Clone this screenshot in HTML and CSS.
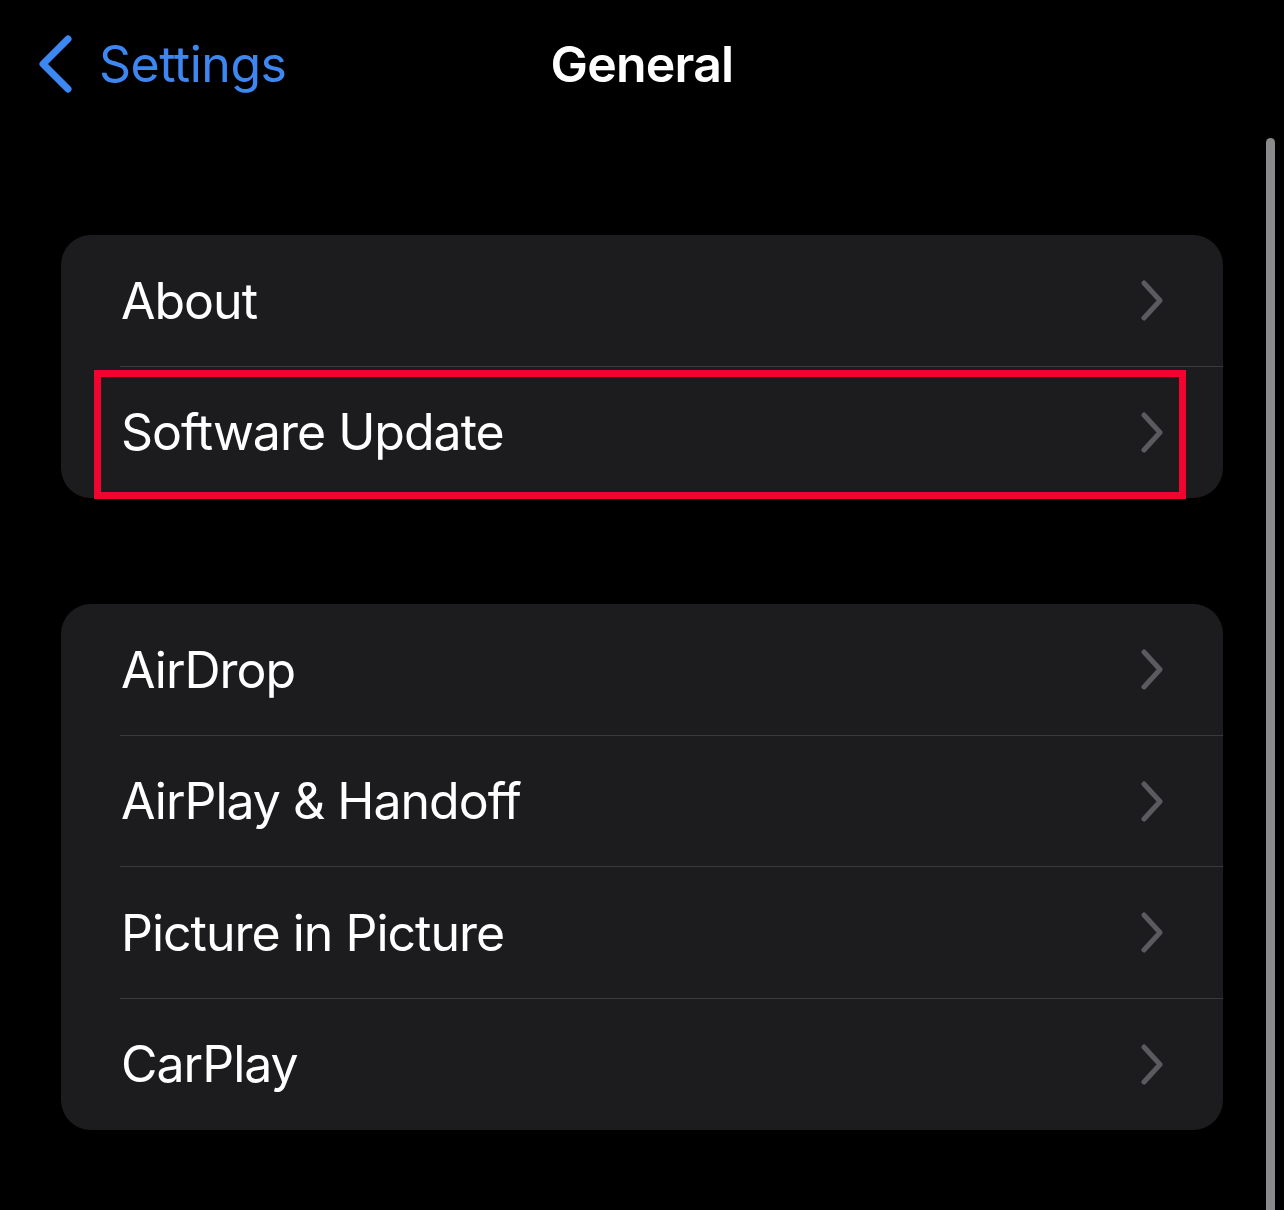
FILE: index.html
```html
<!DOCTYPE html>
<html lang="en">
<head>
<meta charset="utf-8">
<title>General</title>
<link rel="stylesheet" href="styles.css">
</head>
<body>
<div class="screen">
  <header class="nav">
    <a class="back" href="#">
      <svg class="back-icon" width="36" height="58" viewBox="0 0 36 58" aria-hidden="true">
        <path d="M31 4 L6 29 L31 54" fill="none" stroke="#3d87f2" stroke-width="7" stroke-linecap="round" stroke-linejoin="round"/>
      </svg>
      <span class="back-label">Settings</span>
    </a>
    <h1 class="title">General</h1>
    <div class="nav-spacer"></div>
  </header>

  <main class="content">
    <section class="group">
      <div class="row">
        <span class="row-label">About</span>
        <svg class="chev" width="25" height="41" viewBox="0 0 25 41" aria-hidden="true"><path d="M4 3 L20 20.5 L4 38" fill="none" stroke="#5b5b5f" stroke-width="5" stroke-linecap="round" stroke-linejoin="round"/></svg>
      </div>
      <div class="row highlighted">
        <span class="row-label">Software Update</span>
        <svg class="chev" width="25" height="41" viewBox="0 0 25 41" aria-hidden="true"><path d="M4 3 L20 20.5 L4 38" fill="none" stroke="#5b5b5f" stroke-width="5" stroke-linecap="round" stroke-linejoin="round"/></svg>
        <div class="highlight-box"></div>
      </div>
    </section>

    <section class="group">
      <div class="row">
        <span class="row-label">AirDrop</span>
        <svg class="chev" width="25" height="41" viewBox="0 0 25 41" aria-hidden="true"><path d="M4 3 L20 20.5 L4 38" fill="none" stroke="#5b5b5f" stroke-width="5" stroke-linecap="round" stroke-linejoin="round"/></svg>
      </div>
      <div class="row">
        <span class="row-label">AirPlay &amp; Handoff</span>
        <svg class="chev" width="25" height="41" viewBox="0 0 25 41" aria-hidden="true"><path d="M4 3 L20 20.5 L4 38" fill="none" stroke="#5b5b5f" stroke-width="5" stroke-linecap="round" stroke-linejoin="round"/></svg>
      </div>
      <div class="row">
        <span class="row-label">Picture in Picture</span>
        <svg class="chev" width="25" height="41" viewBox="0 0 25 41" aria-hidden="true"><path d="M4 3 L20 20.5 L4 38" fill="none" stroke="#5b5b5f" stroke-width="5" stroke-linecap="round" stroke-linejoin="round"/></svg>
      </div>
      <div class="row">
        <span class="row-label">CarPlay</span>
        <svg class="chev" width="25" height="41" viewBox="0 0 25 41" aria-hidden="true"><path d="M4 3 L20 20.5 L4 38" fill="none" stroke="#5b5b5f" stroke-width="5" stroke-linecap="round" stroke-linejoin="round"/></svg>
      </div>
    </section>
  </main>

  <div class="scrollbar"></div>
</div>
</body>
</html>
```

FILE: styles.css
```css
* { box-sizing: border-box; }

html, body {
  margin: 0;
  padding: 0;
  background: #000;
}

body {
  font-family: Inter, "Noto Sans", "Liberation Sans", sans-serif;
  color: #fff;
  -webkit-font-smoothing: antialiased;
}

.screen {
  position: relative;
  width: 1284px;
  height: 1210px;
  overflow: hidden;
  background: #000;
}

.nav {
  display: grid;
  grid-template-columns: 1fr auto 1fr;
  align-items: center;
  height: 128px;
  padding: 0 37px;
}

.back {
  display: flex;
  align-items: center;
  gap: 26px;
  color: #3d87f2;
  text-decoration: none;
}

.back-icon { display: block; flex: none; }

.back-label {
  font-size: 50px;
  font-weight: 400;
  letter-spacing: -0.5px;
  line-height: 60px;
}

.title {
  margin: 0;
  font-size: 50px;
  font-weight: 600;
  letter-spacing: -0.8px;
  line-height: 60px;
  text-align: center;
}

.content {
  display: flex;
  flex-direction: column;
  gap: 106px;
  padding: 107px 61px 0 61px;
}

.group {
  background: #1c1c1e;
  border-radius: 30px;
}

.row {
  position: relative;
  display: flex;
  align-items: center;
  justify-content: space-between;
  height: 131.5px;
  padding: 0 58px 0 60px;
}

.row + .row::before {
  content: "";
  position: absolute;
  top: -1px;
  left: 59px;
  right: 0;
  height: 1px;
  background: #3a3a3c;
}

.row-label {
  font-size: 50px;
  font-weight: 400;
  letter-spacing: -1px;
  line-height: 60px;
  color: #fff;
}

.chev { display: block; flex: none; }

.highlight-box {
  position: absolute;
  left: 33px;
  top: 3px;
  width: 1092px;
  height: 129px;
  border: 7px solid #ef0530;
  pointer-events: none;
}

.scrollbar {
  position: absolute;
  left: 1266px;
  top: 138px;
  width: 9px;
  height: 1100px;
  border-radius: 5px;
  background: #8a8a8c;
}
```
